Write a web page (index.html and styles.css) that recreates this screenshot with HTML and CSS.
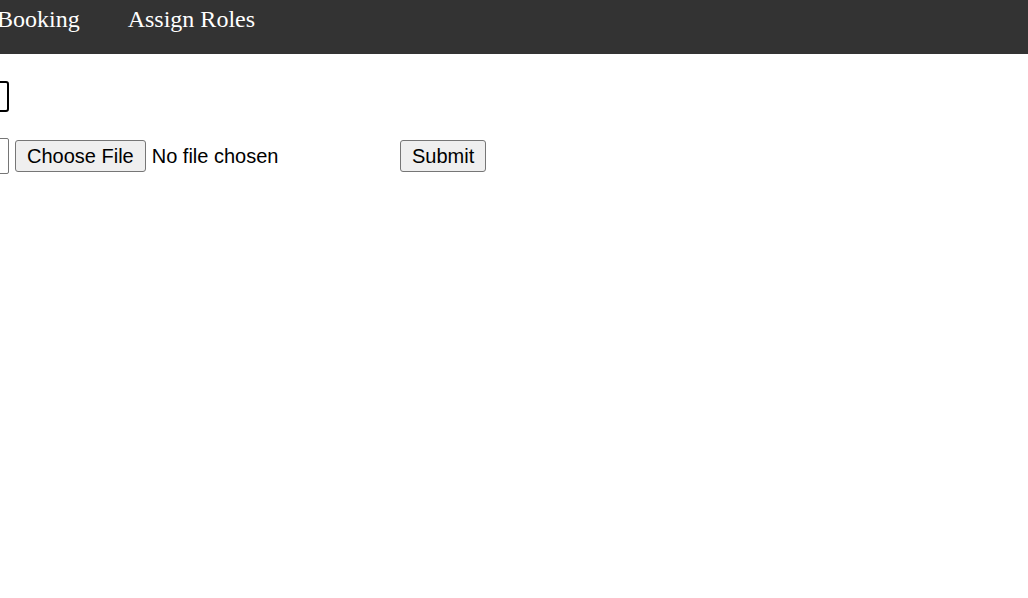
FILE: index.html
```html
<!DOCTYPE html>
<html>
<head>
<meta charset="utf-8">
<link rel="stylesheet" href="styles.css">
</head>
<body>
<nav class="nav">
  <a class="nav-link first" href="#">Booking</a>
  <a class="nav-link" href="#">Assign Roles</a>
</nav>
<main class="content">
  <div class="row row-one">
    <input class="text-box focused" type="text">
  </div>
  <form class="row row-two">
    <input class="text-box plain" type="text">
    <input class="file-input" type="file">
    <button class="btn" type="button">Submit</button>
  </form>
</main>
</body>
</html>
```
FILE: styles.css
```css
html, body {
  margin: 0;
  padding: 0;
  background: #fff;
  overflow: hidden;
}
.nav {
  display: flex;
  height: 54px;
  background: #333333;
  box-sizing: border-box;
  padding-top: 5px;
  margin-left: -27px;
}
.nav-link {
  font-family: "Liberation Serif", "Times New Roman", serif;
  font-size: 24px;
  color: #fff;
  text-decoration: none;
  padding: 0 24px;
  line-height: 28px;
}
.content {
  padding-top: 27px;
}
.row {
  display: flex;
  align-items: center;
}
.row-two {
  margin-top: 26px;
  gap: 6px;
}
.text-box {
  font-family: "Liberation Sans", Arial, sans-serif;
  font-size: 20px;
  box-sizing: border-box;
  width: 200px;
  margin-left: -191px;
  background: #fff;
  outline: none;
}
.focused {
  height: 31px;
  border: 2px solid #000;
  border-radius: 3px;
}
.plain {
  height: 36px;
  border: 1px solid #767676;
  border-radius: 2px;
}
.file-input {
  font-family: "Liberation Sans", Arial, sans-serif;
  font-size: 20px;
  color: #000;
  width: 379px;
  margin: 0;
  padding: 0;
}
.file-input::file-selector-button {
  font-family: "Liberation Sans", Arial, sans-serif;
  font-size: 20px;
  height: 32px;
  padding: 0 11px;
  margin: 0 6px 0 0;
  border: 1px solid #767676;
  border-radius: 3px;
  background: #efefef;
  color: #000;
}
.btn {
  font-family: "Liberation Sans", Arial, sans-serif;
  font-size: 20px;
  height: 32px;
  padding: 0 11px;
  margin: 0;
  border: 1px solid #767676;
  border-radius: 3px;
  background: #efefef;
  color: #000;
}
```
